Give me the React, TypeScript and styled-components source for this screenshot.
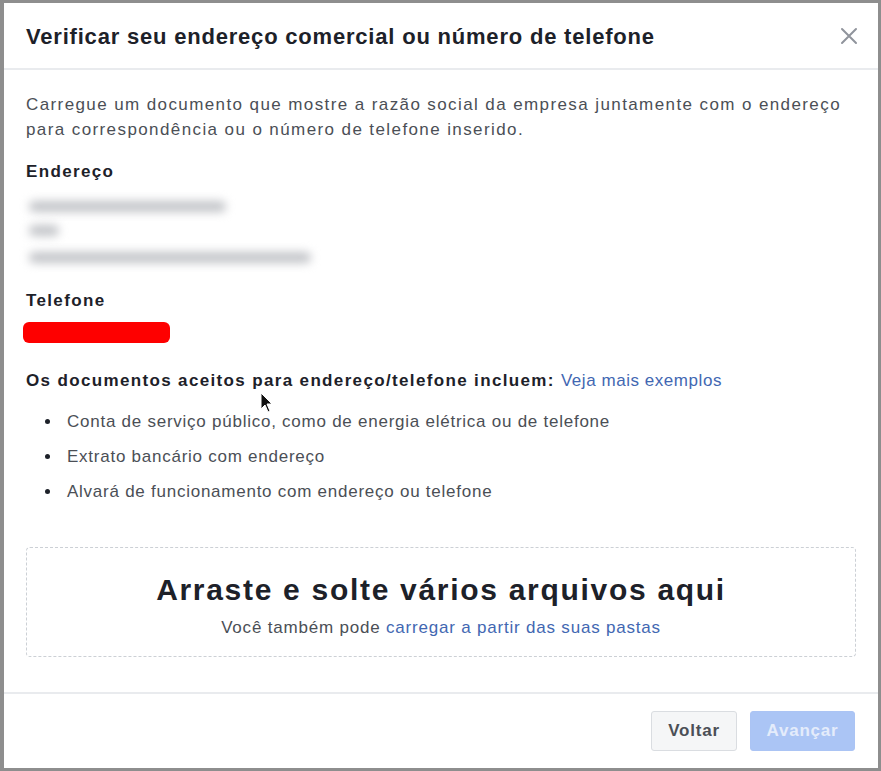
import * as React from "react";
import styled, { createGlobalStyle } from "styled-components";

const GlobalStyle = createGlobalStyle`
  html, body {
    margin: 0;
    padding: 0;
    background: #8e8e8e;
  }
  body {
    font-family: "Liberation Sans", Arial, Helvetica, sans-serif;
  }
`;

const Modal = styled.div`
  position: relative;
  margin: 3px 3px 3px 4px;
  height: 765px;
  background: #fff;
  display: flex;
  flex-direction: column;
`;

const Header = styled.div`
  height: 65px;
  padding: 0 20px 0 22px;
  display: flex;
  align-items: center;
  justify-content: space-between;
  border-bottom: 2px solid #e9ebee;
`;

const Title = styled.h1`
  margin: 2px 0 0 0;
  font-size: 22px;
  letter-spacing: 0.8px;
  font-weight: 700;
  color: #1d2129;
`;

const CloseButton = styled.button`
  border: 0;
  background: none;
  padding: 0;
  width: 18px;
  height: 18px;
  cursor: pointer;
  display: flex;
`;

const Body = styled.div`
  flex: 1;
  padding: 22px 22px 0 22px;
`;

const Intro = styled.p`
  margin: 0;
  font-size: 17px;
  letter-spacing: 1.4px;
  line-height: 25px;
  color: #4b4f56;
`;

const Label = styled.div<{ $top: number }>`
  margin-top: ${(p) => p.$top}px;
  font-size: 17px;
  letter-spacing: 1.35px;
  line-height: 20px;
  font-weight: 700;
  color: #1d2129;
`;

const BlurLine = styled.div<{ $top: number; $width: number }>`
  margin-top: ${(p) => p.$top}px;
  margin-left: 3px;
  width: ${(p) => p.$width}px;
  height: 11px;
  border-radius: 6px;
  background: #c2c4c8;
  filter: blur(5px);
`;

const Redacted = styled.div`
  margin: 11px 0 0 -3px;
  width: 147px;
  height: 21px;
  border-radius: 6px;
  background: #fe0000;
`;

const Link = styled.a`
  color: #4267b2;
  font-weight: 400;
  letter-spacing: 0.55px;
  text-decoration: none;
  cursor: pointer;
`;

const HintLink = styled(Link)`
  letter-spacing: inherit;
`;

const List = styled.ul`
  margin: 13px 0 0 0;
  padding: 0;
  list-style: none;
`;

const Item = styled.li`
  display: flex;
  align-items: center;
  height: 35px;
  font-size: 17px;
  letter-spacing: 0.75px;
  color: #4b4f56;
`;

const Dot = styled.span`
  flex: none;
  width: 5px;
  height: 5px;
  border-radius: 50%;
  background: #1d2129;
  margin: 0 17px 0 19px;
`;

const DropZone = styled.div`
  margin-top: 38px;
  height: 110px;
  padding-top: 6px;
  box-sizing: border-box;
  border: 1px dashed #ccd0d5;
  border-radius: 4px;
  display: flex;
  flex-direction: column;
  align-items: center;
  justify-content: center;
`;

const DropTitle = styled.div`
  font-size: 30px;
  letter-spacing: 1.7px;
  font-weight: 700;
  color: #1d2129;
  line-height: 36px;
`;

const DropHint = styled.div`
  margin-top: 10px;
  font-size: 17px;
  line-height: 20px;
  letter-spacing: 0.8px;
  color: #4b4f56;
`;

const Footer = styled.div`
  height: 74px;
  border-top: 2px solid #e9ebee;
  display: flex;
  align-items: center;
  justify-content: flex-end;
  gap: 13px;
  padding: 0 23px 0 0;
`;

const Button = styled.button<{ $primary?: boolean; $width: number }>`
  width: ${(p) => p.$width}px;
  height: 40px;
  border-radius: 3px;
  font-family: inherit;
  font-size: 17px;
  letter-spacing: 0.8px;
  font-weight: 700;
  border: 1px solid ${(p) => (p.$primary ? "#abc4f4" : "#dadde1")};
  background: ${(p) => (p.$primary ? "#abc5f5" : "#f5f6f7")};
  color: ${(p) => (p.$primary ? "#e4ecfb" : "#4b4f56")};
  cursor: pointer;
`;

const Cursor = styled.svg`
  position: absolute;
  left: 256px;
  top: 389px;
  pointer-events: none;
`;

const CloseIcon = () => (
  <svg width="18" height="18" viewBox="0 0 18 18">
    <path d="M2 2 L16 16 M16 2 L2 16" stroke="#90949c" strokeWidth="2" strokeLinecap="round" />
  </svg>
);

const bullets = [
  "Conta de serviço público, como de energia elétrica ou de telefone",
  "Extrato bancário com endereço",
  "Alvará de funcionamento com endereço ou telefone",
];

export default function App() {
  return (
    <>
      <GlobalStyle />
      <Modal>
        <Header>
          <Title>Verificar seu endereço comercial ou número de telefone</Title>
          <CloseButton aria-label="Fechar">
            <CloseIcon />
          </CloseButton>
        </Header>
        <Body>
          <Intro>
            Carregue um documento que mostre a razão social da empresa juntamente com o endereço
            para correspondência ou o número de telefone inserido.
          </Intro>
          <Label $top={20}>Endereço</Label>
          <BlurLine $top={19} $width={197} />
          <BlurLine $top={13} $width={30} />
          <BlurLine $top={16} $width={282} />
          <Label $top={28}>Telefone</Label>
          <Redacted />
          <Label $top={28}>
            Os documentos aceitos para endereço/telefone incluem: <Link>Veja mais exemplos</Link>
          </Label>
          <List>
            {bullets.map((b) => (
              <Item key={b}>
                <Dot />
                {b}
              </Item>
            ))}
          </List>
          <DropZone>
            <DropTitle>Arraste e solte vários arquivos aqui</DropTitle>
            <DropHint>
              Você também pode <HintLink>carregar a partir das suas pastas</HintLink>
            </DropHint>
          </DropZone>
        </Body>
        <Footer>
          <Button $width={86}>Voltar</Button>
          <Button $primary $width={105}>Avançar</Button>
        </Footer>
        <Cursor width="14" height="22" viewBox="0 0 14 22">
          <path d="M1 1 L1 17 L5 13 L8 20 L10 19 L7 12 L12 12 Z" fill="#111" stroke="#fff" strokeWidth="1" />
        </Cursor>
      </Modal>
    </>
  );
}
